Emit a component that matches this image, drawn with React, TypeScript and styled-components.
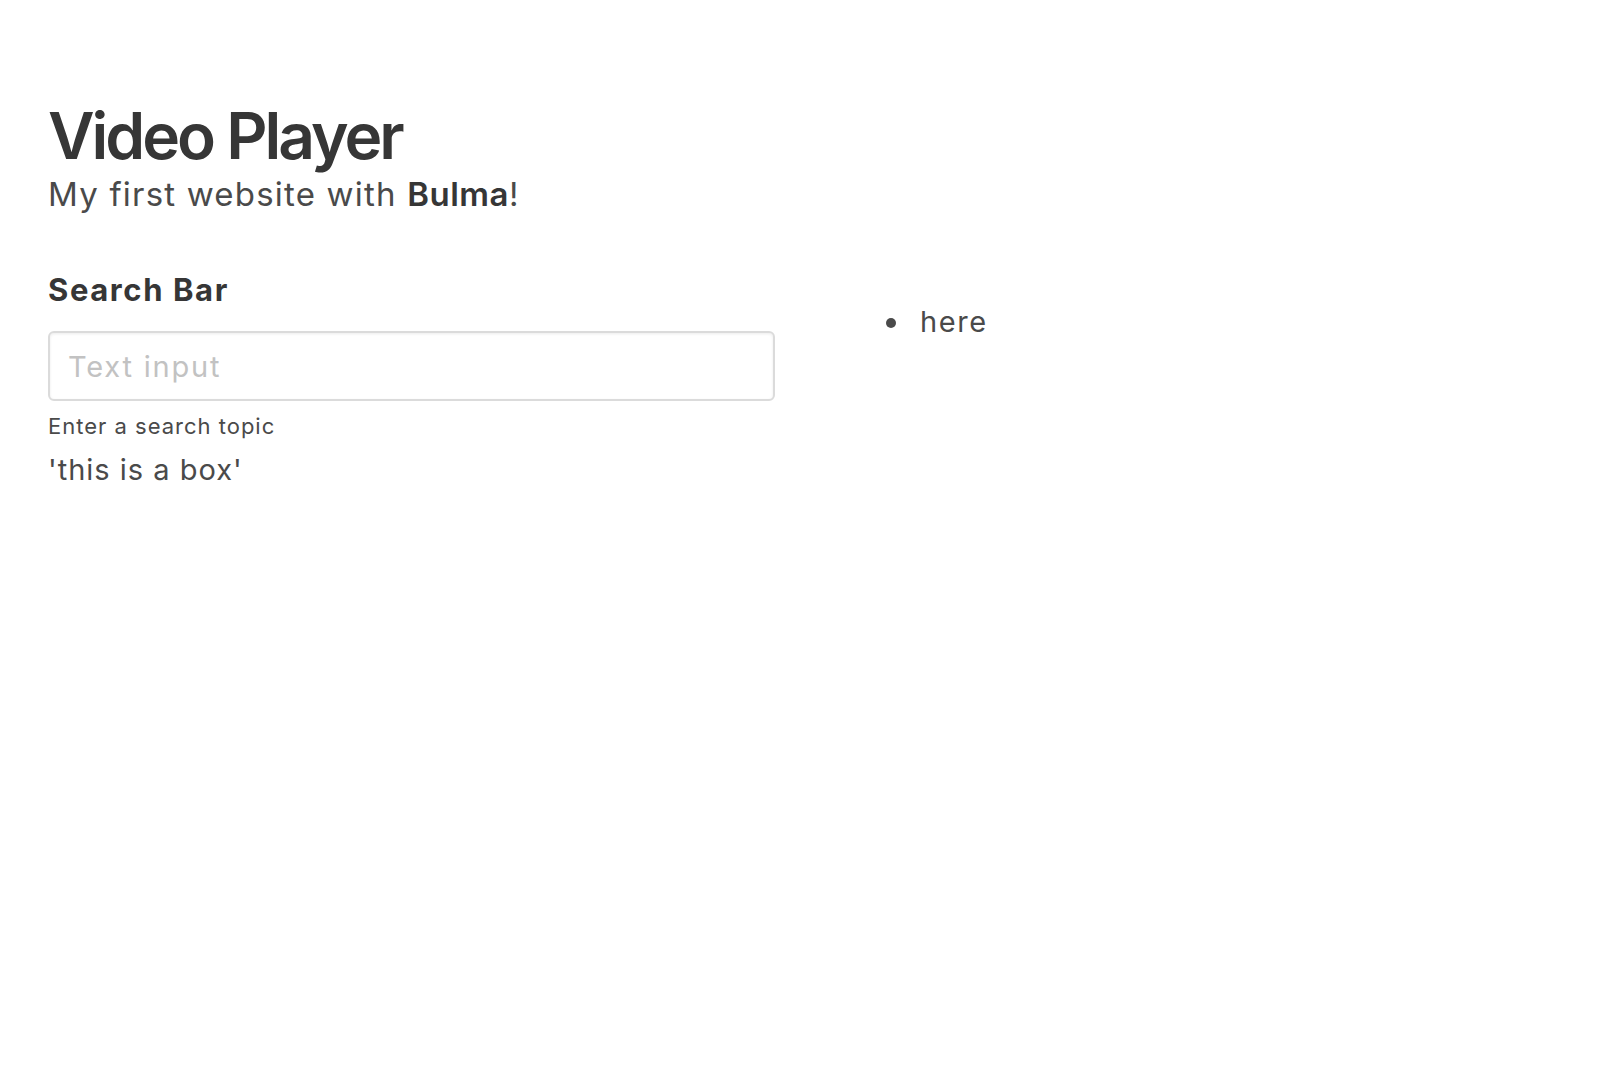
import React from "react";
import styled, { createGlobalStyle } from "styled-components";

const Global = createGlobalStyle`
  html, body { margin: 0; padding: 0; background: #fff; }
  body { font-family: Inter, "Noto Sans", sans-serif; color: #4a4a4a; }
  * { box-sizing: border-box; }
`;

const Page = styled.div`
  padding: 104px 48px 0 48px;
`;

const Title = styled.h1`
  margin: 0;
  font-size: 64px;
  line-height: 64px;
  font-weight: 600;
  color: #363636;
  letter-spacing: -3px;
`;

const Subtitle = styled.h2`
  margin: 8px 0 0 0;
  font-size: 33px;
  line-height: 36px;
  font-weight: 400;
  color: #4a4a4a;
  letter-spacing: 1.2px;
  strong { font-weight: 600; color: #363636; letter-spacing: 0.5px; }
`;

const Columns = styled.div`
  display: flex;
  margin-top: 60px;
`;

const LeftColumn = styled.div`
  width: 727px;
  flex: none;
  display: flex;
  flex-direction: column;
`;

const RightColumn = styled.div`
  flex: 1;
  padding-left: 111px;
`;

const Label = styled.label`
  font-size: 31px;
  line-height: 36px;
  font-weight: 700;
  color: #363636;
  letter-spacing: 1.6px;
`;

const Input = styled.input`
  margin-top: 23px;
  width: 727px;
  height: 70px;
  border: 2px solid #dbdbdb;
  border-radius: 6px;
  box-shadow: inset 0 1px 3px rgba(10, 10, 10, 0.08);
  padding: 0 18px;
  font-family: inherit;
  font-size: 29px;
  letter-spacing: 1.8px;
  color: #363636;
  outline: none;
  &::placeholder { color: #c2c2c2; }
`;

const Help = styled.p`
  margin: 12px 0 0 0;
  font-size: 22px;
  line-height: 27px;
  letter-spacing: 1px;
  color: #4a4a4a;
`;

const BoxText = styled.div`
  margin-top: 12px;
  font-size: 29px;
  line-height: 36px;
  letter-spacing: 1px;
  color: #4a4a4a;
`;

const List = styled.ul`
  list-style: none;
  margin: 32px 0 0 0;
  padding: 0;
`;

const Item = styled.li`
  display: flex;
  align-items: center;
  gap: 24px;
  font-size: 29px;
  line-height: 36px;
  letter-spacing: 1.6px;
  color: #4a4a4a;
`;

const Dot = styled.span`
  width: 10px;
  height: 10px;
  margin-top: 2px;
  border-radius: 50%;
  background: #4a4a4a;
  flex: none;
`;

export default function App() {
  return (
    <>
      <Global />
      <Page>
        <Title>Video Player</Title>
        <Subtitle>
          My first website with <strong>Bulma</strong>!
        </Subtitle>
        <Columns>
          <LeftColumn>
            <Label>Search Bar</Label>
            <Input type="text" placeholder="Text input" />
            <Help>Enter a search topic</Help>
            <BoxText>'this is a box'</BoxText>
          </LeftColumn>
          <RightColumn>
            <List>
              <Item>
                <Dot />
                here
              </Item>
            </List>
          </RightColumn>
        </Columns>
      </Page>
    </>
  );
}
